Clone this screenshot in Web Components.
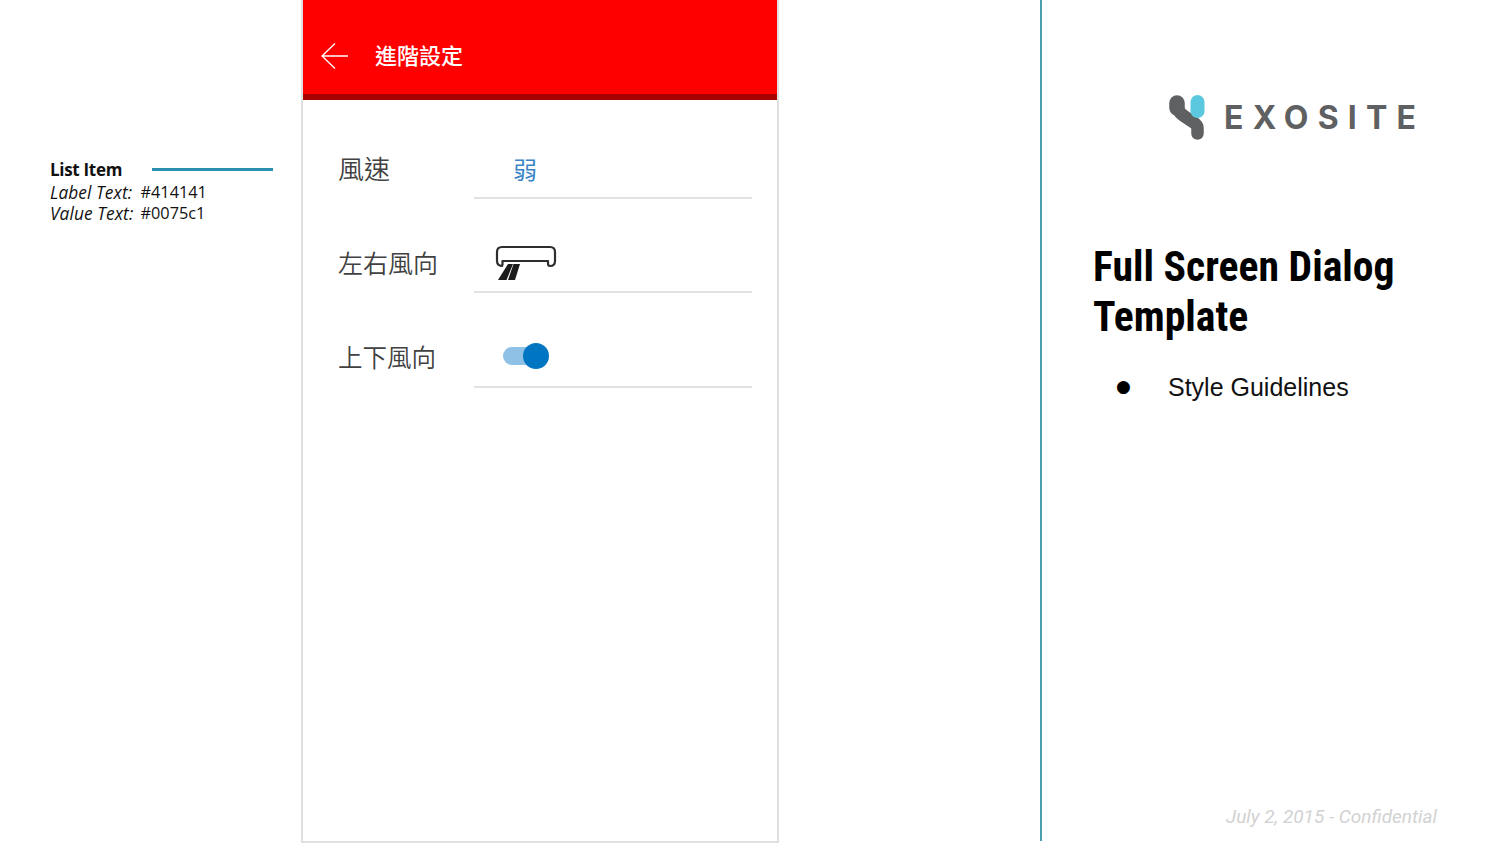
<!DOCTYPE html>
<html lang="zh-Hant">
  <head>
    <meta charset="UTF-8" />
    <title>Full Screen Dialog Template</title>
    <style>
      html, body { margin: 0; background: #fff; overflow: hidden; }
    </style>
  </head>
  <body>
    <slide-page>
      <style-note slot="note"></style-note>
      <phone-dialog slot="phone" heading="進階設定">
        <list-row label="風速" size="26"><span style="color:#3a85c6;font-size:24px;margin:4px 0 0 39px;line-height:1;font-weight:400">弱</span></list-row>
        <list-row label="左右風向" size="25"><ac-icon></ac-icon></list-row>
        <list-row label="上下風向" size="24.5"><toggle-switch></toggle-switch></list-row>
      </phone-dialog>
      <guide-panel slot="panel"></guide-panel>
    </slide-page>

    <script>
      const CJK = '"Noto Sans CJK TC", "Noto Sans", sans-serif';

      class SlidePage extends HTMLElement {
        constructor() {
          super();
          this.attachShadow({ mode: "open" }).innerHTML = `
            <style>
              :host { display: flex; width: 1500px; height: 843px; background: #fff; }
              .note { display: block; width: 251px; margin-left: 50px; }
              .phone { display: block; width: 478px; }
              .gap { width: 261px; }
              .panel { display: block; flex: 1; }
            </style>
            <div class="note"><slot name="note"></slot></div>
            <div class="phone"><slot name="phone"></slot></div>
            <div class="gap"></div>
            <div class="panel"><slot name="panel"></slot></div>`;
        }
      }

      class StyleNote extends HTMLElement {
        constructor() {
          super();
          this.attachShadow({ mode: "open" }).innerHTML = `
            <style>
              :host { display: block; padding-top: 158px; font: 17px/21px "Open Sans", "Noto Sans", sans-serif; color: #111; }
              .head { display: flex; align-items: center; gap: 30px; width: 223px; height: 22px; margin-bottom: 2px; font-weight: 700; font-size: 17px; letter-spacing: -0.3px; }
              .head i { flex: 1; height: 3px; background: #2b8fb0; }
              .row { display: flex; font-size: 16.300px; }
              em { width: 90.500px; font-size: 17.300px; letter-spacing: 0.1px; }
            </style>
            <div class="head"><span>List Item</span><i></i></div>
            <div class="row"><em>Label Text:</em><span>#414141</span></div>
            <div class="row"><em>Value Text:</em><span>#0075c1</span></div>`;
        }
      }

      class PhoneDialog extends HTMLElement {
        constructor() {
          super();
          this.attachShadow({ mode: "open" }).innerHTML = `
            <style>
              :host { display: block; box-sizing: border-box; height: 843px; border: 2px solid #e0e0e0; border-top: 0; }
              header { display: flex; align-items: center; gap: 26px; box-sizing: border-box; height: 100px; padding: 18px 0 0 18px; background: #fe0000; border-bottom: 6px solid #a90000; color: #fff; }
              h1 { margin: -4px 0 0; font: 500 22px/1 ${CJK}; color: #fff; }
              svg { display: block; }
              .list { display: block; padding-top: 4px; }
            </style>
            <header>
              <svg width="28" height="28" viewBox="0 0 28 28" fill="none" stroke="#fff" stroke-width="1.300">
                <path d="M27 14H1M14 1.500L1 14l13 12.500" />
              </svg>
              <h1></h1>
            </header>
            <div class="list"><slot></slot></div>`;
          this.shadowRoot.querySelector("h1").textContent = this.getAttribute("heading");
        }
      }

      class ListRow extends HTMLElement {
        constructor() {
          super();
          this.attachShadow({ mode: "open" }).innerHTML = `
            <style>
              :host { display: flex; box-sizing: border-box; height: 94.500px; padding: 0 25px 0 35px; font: 25px/1 ${CJK}; color: #414141; }
              .label { width: 136px; display: flex; align-items: center; padding-top: 34px; font-weight: 350; }
              .value { flex: 1; display: flex; align-items: center; padding-top: 34px; border-bottom: 2px solid #e2e2e2; }
            </style>
            <div class="label"></div>
            <div class="value"><slot></slot></div>`;
          const label = this.shadowRoot.querySelector(".label");
          label.textContent = this.getAttribute("label");
          label.style.fontSize = this.getAttribute("size") + "px";
        }
      }

      class AcIcon extends HTMLElement {
        constructor() {
          super();
          this.attachShadow({ mode: "open" }).innerHTML = `
            <style>
              :host { display: block; margin: 2px 0 0 21px; line-height: 0; }
            </style>
            <svg width="62" height="36" viewBox="0 0 62 36">
              <path d="M8 21C4 21 2 19 2 16V7C2 3.500 4 2 7 2H55C58 2 60 3.500 60 7V16C60 19 58 21 55 21C53.500 21 53 20 53 18.500V16H7.500V20.500" fill="none" stroke="#2e2e2e" stroke-width="2.200" stroke-linejoin="round" />
              <path d="M13 19H18L11.500 35H3ZM18.500 19H25L20 35H13Z" fill="#1c1c1c" />
            </svg>`;
        }
      }

      class ToggleSwitch extends HTMLElement {
        constructor() {
          super();
          this.attachShadow({ mode: "open" }).innerHTML = `
            <style>
              :host { display: block; position: relative; width: 46px; height: 26px; margin-left: 29px; }
              .track { position: absolute; left: 0; right: 10px; top: 4px; height: 18px; border-radius: 9px; background: #8fc0e5; }
              .thumb { position: absolute; right: 0; top: 0; width: 26px; height: 26px; border-radius: 50%; background: #0075c1; }
            </style>
            <div class="track"></div><div class="thumb"></div>`;
        }
      }

      class ExositeLogo extends HTMLElement {
        constructor() {
          super();
          this.attachShadow({ mode: "open" }).innerHTML = `
            <style>
              :host { display: flex; align-items: center; gap: 18px; }
              svg { display: block; }
              span { font: 700 32px/1 Inter, "Liberation Sans", sans-serif; letter-spacing: 9.200px; color: #5f6062; }
            </style>
            <svg width="37" height="46" viewBox="0 0 37 46">
              <path d="M8 8V13" fill="none" stroke="#5f6062" stroke-width="15.500" stroke-linecap="round" />
              <path d="M9 14C10 17 12 19 15 21L24 27C27 29 28.500 31 28.500 33V38.500" fill="none" stroke="#5f6062" stroke-width="12.500" stroke-linecap="round" />
              <rect x="21.500" y="0" width="14" height="23" rx="7" fill="#5cc8e0" />
            </svg>
            <span>EXOSITE</span>`;
        }
      }

      class GuidePanel extends HTMLElement {
        constructor() {
          super();
          this.attachShadow({ mode: "open" }).innerHTML = `
            <style>
              :host { display: flex; flex-direction: column; box-sizing: border-box; height: 841px; border-left: 2px solid #4a9fae; padding: 95px 63px 15px 51px; }
              .logo { align-self: flex-start; margin-left: 76px; }
              h2 { margin: 101px 0 0; font: 700 41.700px/50px "Roboto Condensed", "Liberation Sans Narrow", Roboto, sans-serif; color: #000; }
              ul { margin: 25px 0 0; padding: 0; list-style: none; flex: 1; font: 25px/40px "Liberation Sans", Arial, sans-serif; color: #111; }
              li { display: flex; }
              li::before { content: "●"; width: 75px; padding-left: 23px; box-sizing: border-box; font: 17px/38px "DejaVu Sans", sans-serif; color: #000; }
              footer { text-align: right; font: italic 400 19px/1 Roboto, sans-serif; color: #d2d2d2; }
            </style>
            <exosite-logo class="logo"></exosite-logo>
            <h2>Full Screen Dialog<br />Template</h2>
            <ul><li>Style Guidelines</li></ul>
            <footer>July 2, 2015 - Confidential</footer>`;
        }
      }

      customElements.define("slide-page", SlidePage);
      customElements.define("style-note", StyleNote);
      customElements.define("phone-dialog", PhoneDialog);
      customElements.define("list-row", ListRow);
      customElements.define("ac-icon", AcIcon);
      customElements.define("toggle-switch", ToggleSwitch);
      customElements.define("exosite-logo", ExositeLogo);
      customElements.define("guide-panel", GuidePanel);
    </script>
  </body>
</html>
